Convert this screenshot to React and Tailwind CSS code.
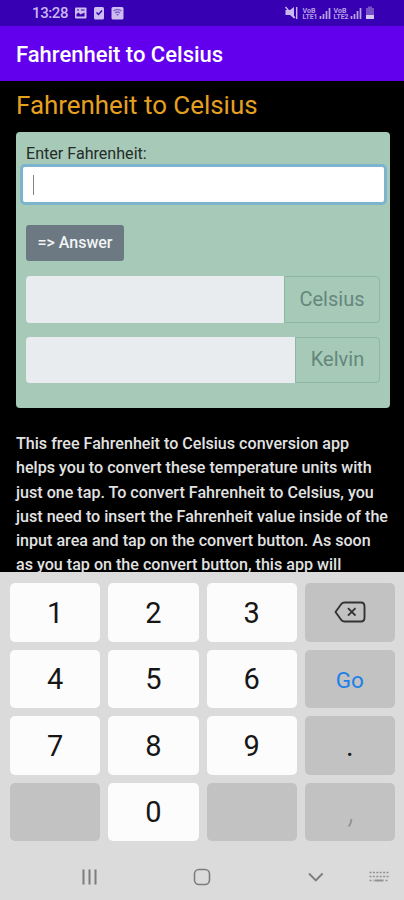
import React from "react";

const paragraph = [
  "This free Fahrenheit to Celsius conversion app",
  "helps you to convert these temperature units with",
  "just one tap. To convert Fahrenheit to Celsius, you",
  "just need to insert the Fahrenheit value inside of the",
  "input area and tap on the convert button. As soon",
  "as you tap on the convert button, this app will",
];

function StatusBar() {
  return (
    <div className="flex h-[26px] items-center bg-[#3700b3] pr-[28px] pl-[32px] text-[#c9b8ef]">
      <span className="w-[42px] text-[15px] leading-none tracking-[-0.4px] font-medium">13:28</span>
      <svg width="51" height="14" viewBox="0 0 51 14" className="text-[#cdbdf0]">
        <rect x="1" y="1.5" width="11.500" height="11" rx="1" fill="currentColor" />
        <path d="M2.5 10.500V8l2-1.500 2 2 4-2v4z" fill="#3700b3" />
        <path d="M3 4h2M7 4h3.500" stroke="#3700b3" />
        <rect x="20" y="1" width="10" height="12.500" rx="1.500" fill="currentColor" />
        <path d="M22.500 6.500l2 2 3.500-4" fill="none" stroke="#3700b3" strokeWidth="1.400" />
        <rect x="37.500" y="1" width="12" height="12.500" rx="1.500" fill="currentColor" />
        <path d="M39.500 5q4-3 8 0M41 7q2.500-2 5 0" fill="none" stroke="#8063cf" strokeWidth="1.300" />
        <path d="M42 8h3l-1.500 2z" fill="#8063cf" />
      </svg>
      <svg width="92" height="16" viewBox="0 0 92 16" className="ml-auto">
        <path d="M1.500 5h4.500l4-3v11.500l-4-3.500H1.500z" fill="#c9b8ef" />
        <path d="M1.500 2l9.500 11M12.700 2v12" stroke="#c9b8ef" strokeWidth="1.400" />
        <g fill="#b7a1e6" fontFamily="Roboto, sans-serif" fontWeight="700" fontSize="8">
          <text x="18.500" y="8" textLength="13" lengthAdjust="spacingAndGlyphs">VoB</text>
          <text x="18.500" y="14.300" textLength="15" lengthAdjust="spacingAndGlyphs">LTE1</text>
          <text x="49.500" y="8" textLength="13" lengthAdjust="spacingAndGlyphs">VoB</text>
          <text x="49.500" y="14.300" textLength="15" lengthAdjust="spacingAndGlyphs">LTE2</text>
        </g>
        <path d="M36.500 14v-3M39.500 14V9M42.500 14V6M45.500 14V3M67.500 14v-3M70.500 14V9M73.500 14V6M76.500 14V3" stroke="#bba6e8" strokeWidth="1.700" />
        <path d="M82 3h2V1.500h4V3h2v7h-8z" fill="#7651c6" />
        <rect x="82" y="10" width="8" height="4" fill="#d5c8f2" />
      </svg>
    </div>
  );
}

function ResultRow({ label, height, addon }) {
  return (
    <div className={"flex " + height}>
      <div className="flex-1 rounded-l-[4px] bg-[#e8ecee]" />
      <div className={"flex items-center justify-center rounded-r-[4px] border border-[#8db7a4] pb-[2px] text-[20px] text-[#65877b] " + addon}>
        {label}
      </div>
    </div>
  );
}

function Key({ children, gray, className = "pt-[2px] text-[29px] text-[#161616]" }) {
  return (
    <div
      className={
        "flex items-center justify-center rounded-[5px] leading-none " +
        (gray ? "bg-[#c2c2c2] " : "bg-[#fcfcfc] ") +
        className
      }
    >
      {children}
    </div>
  );
}

function Keyboard() {
  return (
    <div className="flex h-[328px] shrink-0 flex-col bg-[#dbdbdb]">
      <div className="mt-[11px] ml-[10px] grid h-[258px] w-[385px] grid-cols-4 grid-rows-4 gap-[8px]">
        <Key>1</Key>
        <Key>2</Key>
        <Key>3</Key>
        <Key gray className="">
          <svg width="32" height="22" viewBox="0 0 32 22" fill="none" stroke="#333" strokeWidth="1.900" strokeLinejoin="round">
            <path d="M10.500 1.500H27Q30.500 1.500 30.500 5.500V16.500Q30.500 20.500 27 20.500H10.500Q8.500 20.500 7.500 19.200L1.500 11 7.500 2.800Q8.500 1.500 10.500 1.500Z" />
            <path d="M14 7.200l7.500 7.500M21.500 7.200l-7.500 7.500" />
          </svg>
        </Key>
        <Key>4</Key>
        <Key>5</Key>
        <Key>6</Key>
        <Key gray className="pt-[2px] text-[22.500px] text-[#1d7fe8]">Go</Key>
        <Key>7</Key>
        <Key>8</Key>
        <Key>9</Key>
        <Key gray>.</Key>
        <Key gray />
        <Key>0</Key>
        <Key gray />
        <Key gray className="">
          <svg width="8" height="12" viewBox="0 0 8 12" className="mt-[22px]">
            <path d="M5.500 2L4.700 6 2.800 9.500" fill="none" stroke="#929292" strokeWidth="1.800" />
          </svg>
        </Key>
      </div>
      <div className="mt-[26px] flex h-[20px] items-center text-[#7d7d7d]">
        <svg width="404" height="20" viewBox="0 0 404 20" fill="none" stroke="currentColor" strokeWidth="1.600">
          <path d="M83.500 2.500v15M89.500 2.500v15M95.500 2.500v15" strokeWidth="2" />
          <rect x="194.500" y="2.500" width="15" height="15" rx="4.500" />
          <path d="M309 6.500l6.800 6.800 6.800-6.800" strokeWidth="1.900" />
          <path d="M369.500 5.500h19M369.500 9.500h19M369.500 13.500h4M385.500 13.500h3" strokeWidth="1.500" strokeDasharray="2 1.400" stroke="#929292" />
          <path d="M374.500 13.500h9" strokeWidth="2" stroke="#929292" />
        </svg>
      </div>
    </div>
  );
}

export default function App() {
  return (
    <div className="flex h-[900px] w-[404px] flex-col overflow-hidden bg-black font-[Roboto,sans-serif]">
      <StatusBar />
      <header className="flex h-[55px] items-center bg-[#6200ee] pt-[2px] pl-[16px] text-[22px] leading-none font-medium whitespace-nowrap text-white">
        Fahrenheit to Celsius
      </header>
      <main className="h-[491px] overflow-hidden pl-[16px]">
        <h1 className="flex h-[51px] items-center pb-[2px] text-[25.900px] leading-none whitespace-nowrap text-[#e6a020]">
          Fahrenheit to Celsius
        </h1>
        <section className="flex h-[276px] w-[374px] flex-col rounded-[4px] bg-[#a6c9b8] px-[10px] pt-[12px]">
          <label className="h-[20px] pt-px text-[16.100px] leading-[18px] text-[#252c29]">Enter Fahrenheit:</label>
          <div className="-mr-[7px] -ml-[6px] flex h-[41px] items-center rounded-[5px] border-[3px] border-[#7bb4cc] bg-white pl-[10px]">
            <div className="h-[20px] w-px bg-[#858585]" />
          </div>
          <button className="mt-[20px] h-[36px] w-[98px] rounded-[3px] bg-[#6d7982] text-[16px] leading-none font-medium text-[#f2f4f5]">
            =&gt; Answer
          </button>
          <div className="mt-[15px] flex flex-col gap-[14px]">
            <ResultRow label="Celsius" height="h-[47px]" addon="w-[96px]" />
            <ResultRow label="Kelvin" height="h-[46px]" addon="w-[85px]" />
          </div>
        </section>
        <div className="mt-[24px] text-[16.100px] leading-[24.300px] font-medium whitespace-nowrap text-[#e2e2e2]">
          {paragraph.map((line) => (
            <div key={line}>{line}</div>
          ))}
        </div>
      </main>
      <Keyboard />
    </div>
  );
}
